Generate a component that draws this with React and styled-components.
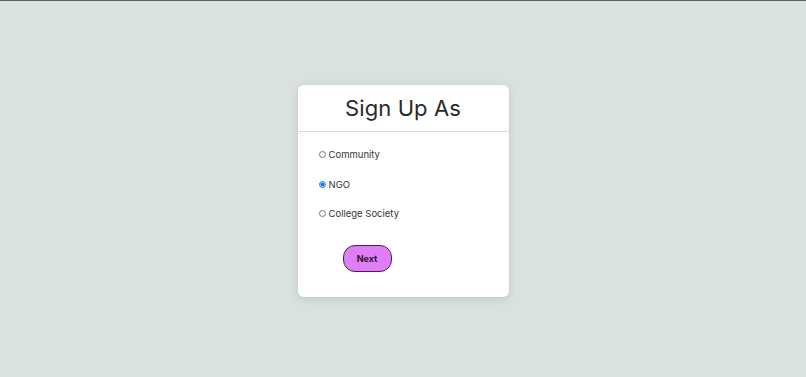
import React, { useState } from "react";
import styled, { createGlobalStyle } from "styled-components";

const GlobalStyle = createGlobalStyle`
  html, body {
    margin: 0;
    padding: 0;
    background: #dae2e0;
    font-family: "Inter", "Noto Sans", sans-serif;
  }
`;

const Page = styled.div`
  min-height: 377px;
  box-sizing: border-box;
  border-top: 1px solid #5d6361;
  display: flex;
  justify-content: center;
  align-items: flex-start;
  padding-top: 84px;
`;

const Card = styled.div`
  width: 211px;
  background: #ffffff;
  border-radius: 6px;
  box-shadow: 0 2px 8px rgba(0, 0, 0, 0.12);
  color: #2b2b2b;
`;

const Header = styled.div`
  height: 46px;
  display: flex;
  align-items: center;
  justify-content: center;
  border-bottom: 1px solid #dcdcdc;
`;

const Title = styled.h1`
  margin: 0;
  font-size: 22px;
  font-weight: 400;
  letter-spacing: 0.1px;
  color: #2a2a2a;
`;

const Body = styled.div`
  padding: 16px 0 25px 21px;
  display: flex;
  flex-direction: column;
`;

const Options = styled.div`
  display: flex;
  flex-direction: column;
  gap: 16.5px;
`;

const Option = styled.label`
  display: flex;
  align-items: center;
  gap: 3px;
  font-size: 9.5px;
  height: 13px;
  color: #333;
  cursor: pointer;

  input {
    width: 7px;
    height: 7px;
    margin: 0;
    accent-color: #1a73e8;
  }
`;

const NextButton = styled.button`
  margin: 25px 0 0 24px;
  width: 49px;
  height: 27px;
  border-radius: 12px;
  border: 1px solid #4b2353;
  background: #e07ef5;
  font-family: inherit;
  font-size: 9px;
  font-weight: 700;
  color: #2a1530;
  align-self: flex-start;
  cursor: pointer;
`;

const choices = ["Community", "NGO", "College Society"];

export default function App() {
  const [picked, setPicked] = useState("NGO");
  return (
    <>
      <GlobalStyle />
      <Page>
        <Card>
          <Header>
            <Title>Sign Up As</Title>
          </Header>
          <Body>
            <Options>
              {choices.map((c) => (
                <Option key={c}>
                  <input
                    type="radio"
                    name="role"
                    checked={picked === c}
                    onChange={() => setPicked(c)}
                  />
                  {c}
                </Option>
              ))}
            </Options>
            <NextButton>Next</NextButton>
          </Body>
        </Card>
      </Page>
    </>
  );
}
